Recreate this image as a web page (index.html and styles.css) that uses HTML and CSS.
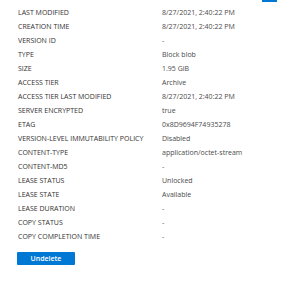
FILE: index.html
```html
<!DOCTYPE html>
<html lang="en">
<head>
    <meta charset="UTF-8">
    <title>Blob properties</title>
    <link rel="stylesheet" href="styles.css">
</head>
<body>
    <div class="panel">
        <div class="top-bar"><span class="tab-marker"></span></div>
        <table class="props">
            <tr><td>LAST MODIFIED</td><td>8/27/2021, 2:40:22 PM</td></tr>
            <tr><td>CREATION TIME</td><td>8/27/2021, 2:40:22 PM</td></tr>
            <tr><td>VERSION ID</td><td>-</td></tr>
            <tr><td>TYPE</td><td>Block blob</td></tr>
            <tr><td>SIZE</td><td>1.95 GiB</td></tr>
            <tr><td>ACCESS TIER</td><td>Archive</td></tr>
            <tr><td>ACCESS TIER LAST MODIFIED</td><td>8/27/2021, 2:40:22 PM</td></tr>
            <tr><td>SERVER ENCRYPTED</td><td>true</td></tr>
            <tr><td>ETAG</td><td>0x8D9694F74935278</td></tr>
            <tr><td>VERSION-LEVEL IMMUTABILITY POLICY</td><td>Disabled</td></tr>
            <tr><td>CONTENT-TYPE</td><td>application/octet-stream</td></tr>
            <tr><td>CONTENT-MD5</td><td>-</td></tr>
            <tr><td>LEASE STATUS</td><td>Unlocked</td></tr>
            <tr><td>LEASE STATE</td><td>Available</td></tr>
            <tr><td>LEASE DURATION</td><td>-</td></tr>
            <tr><td>COPY STATUS</td><td>-</td></tr>
            <tr><td>COPY COMPLETION TIME</td><td>-</td></tr>
        </table>
        <button class="undelete">Undelete</button>
    </div>
</body>
</html>
```

FILE: styles.css
```css
body {
    margin: 0;
    background: #fff;
    font-family: "Open Sans", "Noto Sans", sans-serif;
}

.panel {
    width: 283px;
    height: 282px;
    padding: 0 0 0 18px;
    box-sizing: border-box;
}

.top-bar {
    height: 6px;
    display: flex;
    justify-content: flex-end;
    padding-right: 6px;
}

.tab-marker {
    width: 15px;
    height: 2px;
    background: #0078d4;
}

.props {
    border-collapse: collapse;
}

.props td {
    height: 14px;
    padding: 0;
    font-size: 7px;
    line-height: 14px;
    white-space: nowrap;
    vertical-align: middle;
}

.props td:first-child {
    width: 144px;
    color: #323130;
}

.props td:last-child {
    color: #4a4a4a;
}

.undelete {
    display: block;
    margin: 8px 0 0 -1px;
    width: 58px;
    height: 13px;
    padding: 0;
    border: none;
    border-radius: 1px;
    background: #0078d4;
    color: #fff;
    font-family: "Open Sans", "Noto Sans", sans-serif;
    font-size: 7px;
    font-weight: 600;
}
```
